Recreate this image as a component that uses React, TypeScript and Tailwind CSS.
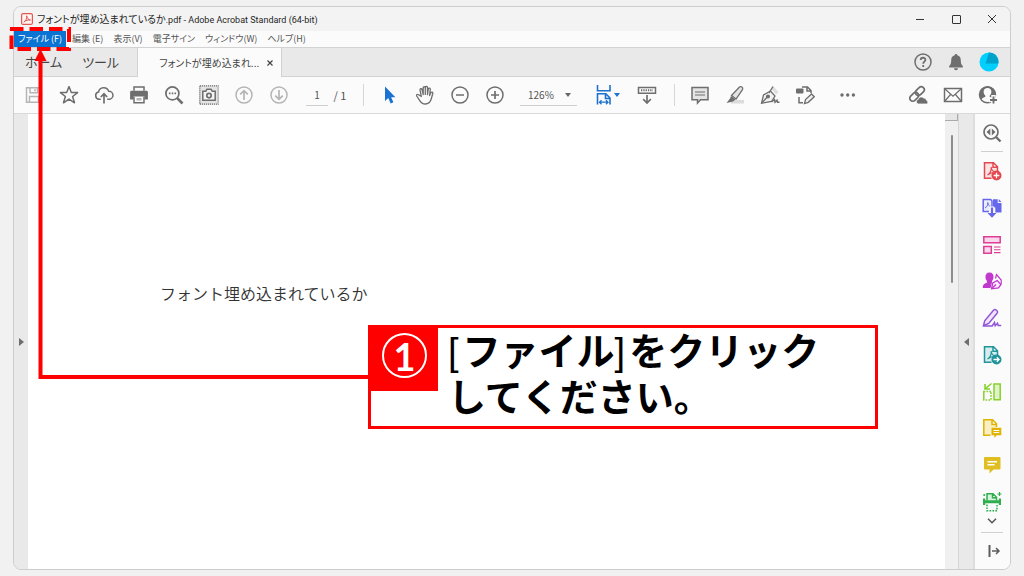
import React from "react";

type IconProps = { children: React.ReactNode; className?: string };

function Icon({ children, className = "size-5 text-[#6e6e6e]" }: IconProps) {
  return (
    <svg viewBox="0 0 20 20" fill="none" stroke="currentColor" strokeWidth="1.5" className={className} aria-hidden="true">
      {children}
    </svg>
  );
}

const menuItems = ["編集 (E)", "表示(V)", "電子サイン", "ウィンドウ(W)", "ヘルプ(H)"];

const fileTools = [
  {
    label: "保存",
    dim: true,
    icon: (
      <>
        <path d="M2.5 2.8h12.3l2.7 2.7v11.7h-15z" />
        <path d="M6 2.8v5h7.5v-5M11 4v2.2M5.5 17v-5.5h9V17" />
      </>
    ),
  },
  {
    label: "お気に入り",
    icon: <path strokeLinejoin="round" d="M10 1.6l2.3 6h6.3l-5 3.9 1.9 6.3L10 14.1l-5.5 3.7 1.9-6.3-5-3.9h6.3z" />,
  },
  {
    label: "クラウドに保存",
    icon: (
      <>
        <path d="M6.8 14.2H5a3.6 3.6 0 0 1-.5-7.1 5.3 5.3 0 0 1 10.2-.9 4 4 0 0 1 .5 8h-2" />
        <path strokeWidth="1.7" d="M10 18.5V9M6.8 12L10 8.8l3.2 3.2" />
      </>
    ),
  },
  {
    label: "印刷",
    icon: (
      <>
        <path d="M5 5.8V2h10v3.8" />
        <path fill="currentColor" stroke="none" d="M2.5 5.8h15a1.4 1.4 0 0 1 1.4 1.4V14.5h-3.4v-3h-11v3H1.100V7.200a1.4 1.4 0 0 1 1.4-1.4z" />
        <path d="M5 11.8v6h10v-6" />
        <path strokeWidth="2.5" opacity="0.5" d="M7.5 14.3h5" />
      </>
    ),
  },
  {
    label: "検索",
    icon: (
      <>
        <circle cx="8.4" cy="8.4" r="6.5" strokeWidth="1.7" />
        <path strokeWidth="2.6" d="M13.2 13.2l5.3 5.3" />
        <path strokeWidth="1.6" strokeDasharray="1.6 1.2" d="M4.9 8.4h7.2" />
      </>
    ),
  },
  {
    label: "スナップショット",
    icon: (
      <>
        <rect x="0.8" y="0.8" width="18.4" height="18.4" fill="#e4e4e4" strokeWidth="1.2" strokeDasharray="1.2 0.8" />
        <path fill="#f4f4f4" d="M3.8 6.2h3l1.2-2h4l1.2 2h3v9H3.800z" />
        <circle cx="10" cy="10.6" r="2.2" strokeWidth="1.7" />
      </>
    ),
  },
  {
    label: "前のページ",
    dim: true,
    icon: (
      <>
        <circle cx="10" cy="10" r="8" />
        <path strokeWidth="1.7" d="M10 15V6M6.2 9.4L10 5.6l3.8 3.8" />
      </>
    ),
  },
  {
    label: "次のページ",
    dim: true,
    icon: (
      <>
        <circle cx="10" cy="10" r="8" />
        <path strokeWidth="1.7" d="M10 5v9M6.2 10.6l3.8 3.8 3.8-3.8" />
      </>
    ),
  },
];

const viewTools = [
  {
    label: "選択ツール",
    blue: true,
    icon: <path fill="currentColor" stroke="none" d="M5 1.5v14.6l3.3-3 2.3 5.4 2.8-1.2-2.3-5.1h4.3z" />,
  },
  {
    label: "手のひらツール",
    icon: (
      <path
        strokeWidth="1.3"
        strokeLinejoin="round"
        d="M6.3 11.5L5 4.9c-.3-1.5 1.7-1.9 2-.4l1.2 5V2.7c0-1.5 2.1-1.5 2.1 0v6.7-7c0-1.5 2.2-1.5 2.2 0v7.3l.8-5.7c.2-1.4 2.2-1.1 2 .3l-.7 6.2 1.2-2.7c.6-1.3 2.4-.7 2 .7l-1.5 5.3c-.9 3.3-2.9 5.2-6 5.2-3 0-4.4-1.5-5.7-3.7L1.7 11c-.7-1.3.8-2.2 1.9-1.3z"
      />
    ),
  },
  {
    label: "縮小",
    icon: (
      <>
        <circle cx="10" cy="10" r="8" />
        <path strokeWidth="1.7" d="M6 10h8" />
      </>
    ),
  },
  {
    label: "拡大",
    icon: (
      <>
        <circle cx="10" cy="10" r="8" />
        <path strokeWidth="1.7" d="M6 10h8M10 6v8" />
      </>
    ),
  },
];

const markupTools = [
  {
    label: "コメント",
    icon: (
      <>
        <path fill="#e4e4e4" d="M2 2.5h16v12.2h-7.5L7.5 18v-3.3H2z" />
        <path strokeWidth="1.2" d="M5 7h10M5 10h10" />
      </>
    ),
  },
  {
    label: "ハイライト",
    icon: (
      <>
        <path fill="#dcdcdc" stroke="none" d="M6 15h13v3.5H6z" />
        <path fill="#e4e4e4" strokeWidth="1.3" d="M6.5 10.5l8-8.5c1.5-1.2 4 .6 3 2.6L11 14z" />
        <path fill="currentColor" stroke="none" d="M6 11l4.5 3.5-2.5 2-6.5 1.5 3.5-4.5z" />
      </>
    ),
  },
  {
    label: "署名",
    icon: (
      <>
        <path strokeWidth="1.3" fill="#f2f2f2" d="M1.5 18.3l2-8.3 7-4 4.5 5-3.5 5.5z" />
        <path strokeWidth="1.3" d="M1.5 18.3l5.5-6" />
        <circle cx="8" cy="11.5" r="1.3" fill="currentColor" />
        <path fill="#dedede" stroke="none" d="M11.5 4l2-2.500 5 5.500-2.500 2.500z" />
        <path strokeWidth="1.4" d="M9 8L13 1.5M11.5 17l3-2.5.5 2.7 2-2 .5 2h2" />
      </>
    ),
  },
  {
    label: "ページを編集",
    icon: (
      <>
        <path d="M7 2h5.5L16 5.5V8M12 2v4h4M4 12v5.8h4" />
        <rect x="1" y="3.5" width="7.5" height="5" rx="1" fill="currentColor" stroke="none" />
        <path strokeWidth="1.3" fill="#eee" d="M9.5 18.5l1-4 6-5.5 2.8 2.8-6 5.5z" />
      </>
    ),
  },
];

const shareTools = [
  {
    label: "リンクを共有",
    icon: (
      <>
        <g transform="rotate(-45 9 9)">
          <rect x="0" y="6" width="10" height="6" rx="3" strokeWidth="1.7" />
          <rect x="8" y="6" width="10" height="6" rx="3" strokeWidth="1.7" />
        </g>
        <path
          fill="currentColor"
          stroke="#fbfbfb"
          strokeWidth="0.8"
          d="M10.2 19a2.4 2.4 0 0 1 0-4.7 3.2 3.2 0 0 1 5.5-1.3 2.7 2.7 0 0 1 2.8 2.3 1.9 1.9 0 0 1 0 3.7z"
        />
      </>
    ),
  },
  {
    label: "メールで送信",
    icon: (
      <>
        <path d="M1.5 3.5h17v13h-17z" />
        <path strokeWidth="1.2" d="M2 4l8 7.2L18 4M2 16l5.5-6.5M18 16l-5.5-6.5" />
      </>
    ),
  },
  {
    label: "ユーザーを追加",
    icon: (
      <>
        <circle cx="9.5" cy="9.8" r="8" />
        <path
          fill="currentColor"
          stroke="none"
          fillRule="evenodd"
          d="M9.5 1.3a8.5 8.5 0 0 1 8.4 8.7h-3v2.5h-1.7c-.8-.4-1.7-.7-1.7-1.2 0-.8 1.9-1.7 1.9-4.5 0-2.5-1.5-3.900-3.900-3.900S5.600 4.300 5.600 6.800c0 2.800 1.900 3.700 1.900 4.500 0 1-3.700 1.200-4 3.700A8.500 8.500 0 0 1 9.500 1.300z"
        />
        <path stroke="#fbfbfb" strokeWidth="4.5" d="M15.500 10v9.500M11 15h9" />
        <path strokeWidth="1.9" d="M15.500 11.500v7M12 15h7" />
      </>
    ),
  },
];

const pdfMark = "M5.5 14c2.5-1.5 4-4.5 3.7-8 .3 3.5 2.2 5 4.8 5.3-3 0-6 .7-8.5 2.7";

const sideTools = [
  {
    label: "PDF を作成",
    color: "size-5 text-[#e34850]",
    icon: (
      <>
        <path fill="#fbe3e3" d="M9.5 17.2H2.5V1.800h9l4 4v4.700M11 1.800v4.500h4.500" />
        <path strokeWidth="1.1" d={pdfMark} />
        <circle cx="14.5" cy="14.5" r="5" fill="currentColor" stroke="none" />
        <path stroke="#fff" strokeWidth="1.3" d="M14.5 11.7v5.6M11.7 14.5h5.6" />
      </>
    ),
  },
  {
    label: "PDF を書き出し",
    color: "size-5 text-[#6767ec]",
    icon: (
      <>
        <path fill="#ececff" d="M7 13.5H1.200V1.500h7.500L10 3v8" />
        <path strokeWidth="1" d="M3 10c2-1 3-3 2.8-5.5C6 7 7 8 8.5 8.3" />
        <path fill="currentColor" stroke="none" d="M11 1.2h4.7V5h3.8v9.5h-6.2V9.500H11zM16.700 1l2.800 2.900h-2.800z" />
        <path stroke="#fbfbfb" strokeWidth="4.5" d="M10 8.5V16" />
        <path strokeWidth="2.2" d="M10 9.5V17" />
        <path fill="currentColor" stroke="none" d="M5.5 15h9L10 19.8z" />
      </>
    ),
  },
  {
    label: "PDF を編集",
    color: "size-5 text-[#de3d96]",
    icon: (
      <>
        <path fill="#f8d8ea" d="M1.8 1.8h16.4v6H1.800zM1.800 11.500h7.500v6.700H1.800z" />
        <path strokeWidth="1.1" d="M12 12h6.5M12 14.8h6.5M12 17.6h6.5" />
      </>
    ),
  },
  {
    label: "署名を依頼",
    color: "size-5 text-[#c038cc]",
    icon: (
      <>
        <path
          fill="currentColor"
          stroke="none"
          d="M7.500 1.500c2.700 0 4 1.700 4 4.200 0 2-.7 3.300-1.500 4.300v1.200L8.500 17H.8c-.3-3 1.200-4.500 4.200-5.600V10C4 9 3.500 7.700 3.500 5.700c0-2.500 1.300-4.200 4-4.200z"
        />
        <path strokeWidth="1.3" fill="#faeafa" d="M9.500 17.800l1.200-5.800 4.500-2.500 3.800 4-2.500 3.500z" />
        <path strokeWidth="1.2" d="M9.500 17.800l4.500-4.300M13.500 7.500l1-4 4.700 5.500v4" />
      </>
    ),
  },
  {
    label: "入力と署名",
    color: "size-5 text-[#9256d9]",
    icon: (
      <>
        <path fill="#f0e6fb" d="M1.5 17.8l1.2-5L11.5 2.200c1.700-1.700 5 .8 3.600 3L6.700 15.500z" />
        <path d="M1.5 18h8.700l2.300-3.500.7 3.200 2.300-2.500.7 2.300h3" />
      </>
    ),
  },
  {
    label: "PDF を送信",
    color: "size-5 text-[#1f959b]",
    icon: (
      <>
        <path fill="#d6eced" d="M9.5 17.2H2.500V1.800h9l4 4v4.700M11 1.800v4.500h4.500" />
        <path strokeWidth="1.1" d={pdfMark} />
        <circle cx="14.5" cy="14.5" r="5" fill="currentColor" stroke="none" />
        <path stroke="#fff" strokeWidth="1.3" d="M11.5 14.5h5.5M14.8 12.2l2.300 2.300-2.300 2.300" />
      </>
    ),
  },
  {
    label: "ページを整理",
    color: "size-5 text-[#86d12f]",
    icon: (
      <>
        <path fill="#dff4c6" d="M12 2h6.2v15.8H12z" />
        <path strokeDasharray="1.7 1.2" d="M9 9.5H1.800V18H9zM1.800 9.500V18" />
        <path strokeWidth="1.6" d="M9.5 1.5L3.500 6.500M3 2v5h5" />
      </>
    ),
  },
  {
    label: "コメント用に送信",
    color: "size-5 text-[#dfb300]",
    icon: (
      <>
        <path fill="#f8efc4" d="M8.5 17.2H1.800V1.800h8.700l4 4V9M10 1.800v4.700h4.500" />
        <path fill="currentColor" stroke="none" d="M9.5 9.8h9.8v7.4h-4.5l-2.500 2.600v-2.600H9.500z" />
        <path stroke="#fff" strokeWidth="1" d="M11.5 12.5h5.8M11.5 14.6h5.8" />
      </>
    ),
  },
  {
    label: "注釈",
    color: "size-5 text-[#e0be22]",
    icon: (
      <>
        <path fill="currentColor" stroke="none" d="M3 2h14.500q1 0 1 1v10.500q0 1-1 1h-6L7.500 18.500v-4H3q-1 0-1-1V3q0-1 1-1z" />
        <path stroke="#fff" d="M5.5 6.8h9.500M5.500 9.800h7" />
      </>
    ),
  },
  {
    label: "スキャンと OCR",
    color: "size-5 text-[#2fae4e]",
    icon: (
      <>
        <path fill="#d8f2de" d="M5 8.5V1.800h6l3.500 3.500v3.200M10.500 2v3.800h4" />
        <path fill="currentColor" stroke="none" d="M1 6.5h2.200v1.800h13.600V6.500H19v6.500h-2.200v-1.700H3.200V13H1z" />
        <path strokeDasharray="1.7 1.2" d="M5 12.5v6.200h10v-6.200" />
        <path strokeWidth="1.2" d="M2.200 2v2M1.200 3h2M17.500 0v4M15.500 2h4" />
      </>
    ),
  },
];

type Tool = { label: string; icon: React.ReactNode; dim?: boolean; blue?: boolean };

function ToolButton({ label, icon, dim, blue }: Tool) {
  const color = blue ? "size-5 text-[#1b72d0]" : dim ? "size-5 text-[#b5b5b5]" : "size-5 text-[#6e6e6e]";
  return (
    <button type="button" aria-label={label} className="flex h-9 w-[35px] shrink-0 items-center justify-center">
      <Icon className={color}>{icon}</Icon>
    </button>
  );
}

function TitleBar() {
  return (
    <header className="flex h-6 items-center bg-[#f3f3f3]">
      <svg viewBox="0 0 12 12" className="ml-[7px] size-3 shrink-0" aria-hidden="true">
        <rect x="0.6" y="0.6" width="10.8" height="10.8" rx="1.5" fill="#fff4f3" stroke="#e2574f" strokeWidth="1.2" />
        <path d="M2.8 9C4.8 8 6 5.5 5.7 2.8 6 5.3 7.5 6.8 9.5 7 7 6.8 4.5 7.5 2.8 9z" fill="none" stroke="#e2574f" />
      </svg>
      <h1 className="ml-1 flex-1 whitespace-nowrap text-[10px] leading-4 text-[#1f1f1f]">
        フォントが埋め込まれているか
        <span className="font-[Roboto] text-[9px]">.pdf - Adobe Acrobat Standard (64-bit)</span>
      </h1>
      <button type="button" aria-label="最小化" className="flex h-6 w-9 items-center justify-center">
        <span className="h-px w-2 bg-[#333]" />
      </button>
      <button type="button" aria-label="最大化" className="flex h-6 w-9 items-center justify-center">
        <span className="size-[9px] rounded-[1px] border border-[#333]" />
      </button>
      <button type="button" aria-label="閉じる" className="flex h-6 w-9 items-center justify-center">
        <svg viewBox="0 0 10 10" className="size-[10px]" stroke="#333" aria-hidden="true">
          <path d="M1 1l8 8M9 1L1 9" />
        </svg>
      </button>
    </header>
  );
}

function MenuBar() {
  return (
    <nav className="flex h-4 items-center whitespace-nowrap bg-[#fbfbfb] text-[9px] leading-4 text-[#555]">
      <button type="button" className="h-4 w-[52px] bg-[#0b74d3] text-white">
        ファイル (F)
      </button>
      <div className="ml-1.5 flex gap-2.5">
        {menuItems.map((item) => (
          <button key={item} type="button">
            {item}
          </button>
        ))}
      </div>
    </nav>
  );
}

function TabBar() {
  return (
    <div className="flex h-[30px] items-stretch whitespace-nowrap border-y border-[#d2d2d2] bg-[#e9e9e9] text-[#444]">
      <button type="button" className="ml-[11px] text-[13px]">ホーム</button>
      <button type="button" className="ml-5 text-[13px]">ツール</button>
      <div className="-mb-px ml-[18px] flex w-[145px] items-center justify-between border-x border-[#d2d2d2] bg-[#fbfbfb] pr-1.5 pl-[21px]">
        <button type="button" className="text-[10px]">フォントが埋め込まれ...</button>
        <button type="button" aria-label="タブを閉じる" className="p-0.5">
          <svg viewBox="0 0 6 6" className="size-1.5" stroke="#444" strokeWidth="1.2" aria-hidden="true">
            <path d="M.5.5l5 5M5.5.5l-5 5" />
          </svg>
        </button>
      </div>
      <div className="ml-auto flex items-center pr-[5px]">
        <button type="button" aria-label="ヘルプ" className="flex w-[33px] justify-center">
          <Icon>
            <circle cx="10" cy="10" r="8" />
            <path strokeWidth="1.8" d="M7.700 8c0-3 4.700-2.900 4.700-.2 0 1.900-2.200 1.700-2.200 4M10.200 13v1.900" />
          </Icon>
        </button>
        <button type="button" aria-label="通知" className="flex w-[33px] justify-center">
          <Icon>
            <path
              fill="currentColor"
              stroke="none"
              d="M10 2c.9 0 1.3.6 1.3 1.3 2.5.6 3.500 2.500 3.500 5 0 3.500.7 4.500 2 5.700v1.500H3.200V14c1.300-1.200 2-2.200 2-5.700 0-2.500 1-4.400 3.500-5C8.700 2.600 9.100 2 10 2zM8 16.300h4c0 1.200-.8 2-2 2s-2-.8-2-2z"
            />
          </Icon>
        </button>
        <button type="button" aria-label="アカウント" className="flex w-[33px] justify-center">
          <Icon>
            <circle cx="10" cy="10" r="9.5" fill="#00cfff" stroke="none" />
            <path fill="#00a2cb" stroke="none" d="M6.5 11.5L10 .5a9.500 9.500 0 0 1 9.400 11z" />
          </Icon>
        </button>
      </div>
    </div>
  );
}

function Toolbar() {
  return (
    <div className="flex h-[37px] items-center border-b border-[#d9d9d9] bg-[#fbfbfb] text-[10px] text-[#555]">
      <div className="ml-0.5 flex">
        {fileTools.map((tool) => (
          <ToolButton key={tool.label} {...tool} />
        ))}
      </div>
      <label className="ml-2.5 flex items-center gap-1 whitespace-nowrap">
        <input
          aria-label="ページ番号"
          defaultValue="1"
          className="h-[22px] w-[22px] border-b border-[#cfcfcf] bg-transparent text-center text-[10px]"
        />
        <span className="w-4 text-center text-[11px]">/ 1</span>
      </label>
      <span className="ml-[15px] h-[22px] w-px bg-[#d6d6d6]" />
      <div className="ml-2 flex">
        {viewTools.map((tool) => (
          <ToolButton key={tool.label} {...tool} />
        ))}
      </div>
      <div className="relative ml-2">
        <select
          aria-label="ズーム"
          className="h-[22px] w-[57px] appearance-none border-b border-[#cfcfcf] bg-transparent pl-2 text-[10px]"
        >
          <option>126%</option>
        </select>
        <span className="pointer-events-none absolute top-[9px] right-1.5 border-x-3 border-t-4 border-x-transparent border-t-[#666]" />
      </div>
      <button type="button" aria-label="幅に合わせる" className="ml-2 flex h-9 w-11 items-center justify-center text-[#1b72d0]">
        <Icon className="size-5 text-[#1b72d0]">
          <path strokeWidth="1.6" d="M3.5 0v5.8h12.500V0M3.500 19.500V8.800h8.300L16 13v6.500M11.500 9v4.500H16" />
          <path strokeWidth="1.3" d="M5.5 17.2h8.500M7.500 15.200l-2 2 2 2M12 15.200l2 2-2 2" />
        </Icon>
        <span className="border-x-3 border-t-4 border-x-transparent border-t-[#1b72d0]" />
      </button>
      <ToolButton
        label="スクロール"
        icon={
          <>
            <path d="M1.5 2.5h17v5.7h-17z" />
            <path strokeDasharray="1.3 1" strokeWidth="2" d="M4 5.3h12" />
            <path strokeWidth="1.7" d="M10 10v7.5M6.2 14.2L10 18l3.8-3.8" />
          </>
        }
      />
      <span className="ml-2.5 h-[22px] w-px bg-[#d6d6d6]" />
      <div className="ml-[7px] flex">
        {markupTools.map((tool) => (
          <ToolButton key={tool.label} {...tool} />
        ))}
      </div>
      <div className="ml-2">
        <ToolButton
          label="その他"
          icon={
            <g fill="currentColor" stroke="none">
              <circle cx="4" cy="10" r="1.7" />
              <circle cx="9.7" cy="10" r="1.7" />
              <circle cx="15.4" cy="10" r="1.7" />
            </g>
          }
        />
      </div>
      <div className="ml-auto flex pr-[5px]">
        {shareTools.map((tool) => (
          <ToolButton key={tool.label} {...tool} />
        ))}
      </div>
    </div>
  );
}

function SidePanel() {
  return (
    <aside className="flex w-[37px] flex-col items-center border-l-2 border-[#dedede] bg-[#fbfbfb] pr-px">
      <button type="button" aria-label="ツールを検索" className="flex h-[37px] items-center">
        <Icon>
          <circle cx="9" cy="9" r="7" strokeWidth="1.7" />
          <path strokeWidth="2.4" d="M14 14l4.500 4.500" />
          <path fill="currentColor" stroke="none" d="M8.3 5.5v7L4.500 9zM9.800 5.500v7L13.500 9z" />
        </Icon>
      </button>
      <hr className="w-[22px] border-[#d0d0d0]" />
      <div className="flex flex-1 flex-col pt-px">
        {sideTools.map((tool) => (
          <button key={tool.label} type="button" aria-label={tool.label} className="flex min-h-6 flex-1 items-center">
            <Icon className={tool.color}>{tool.icon}</Icon>
          </button>
        ))}
      </div>
      <button type="button" aria-label="さらに表示" className="-mt-0.5 mb-2">
        <svg viewBox="0 0 10 6" className="h-1.5 w-[10px]" fill="none" stroke="#555" strokeWidth="1.5" aria-hidden="true">
          <path d="M1 .8l4 4 4-4" />
        </svg>
      </button>
      <hr className="w-[22px] border-[#d0d0d0]" />
      <button type="button" aria-label="パネルを折りたたむ" className="flex h-9 items-center">
        <svg viewBox="0 0 14 14" className="ml-1 size-[14px]" fill="none" stroke="#5c5c5c" aria-hidden="true">
          <path strokeWidth="2" d="M2.5 1v12" />
          <path strokeWidth="1.5" d="M5 7h7M9 4l3 3-3 3" />
        </svg>
      </button>
    </aside>
  );
}

function DocumentArea() {
  return (
    <div className="flex flex-1 items-stretch">
      <button type="button" aria-label="左パネルを開く" className="flex w-[14px] items-center justify-center bg-[#e9e9e9]">
        <span className="border-y-4 border-l-5 border-y-transparent border-l-[#6e6e6e]" />
      </button>
      <main className="flex-1 bg-white">
        <p className="pt-[167px] pl-[132px] text-base leading-6 font-[350] text-[#333]">フォント埋め込まれているか</p>
      </main>
      <div className="flex w-[14px] flex-col items-center border-r border-[#d6d6d6] bg-[#f0f0f0]">
        <span className="h-[7px] w-full border-r border-b border-[#aaa] bg-[#e6e6e6]" />
        <span className="mt-[14px] h-[148px] w-0.5 rounded-full bg-[#8d8d8d]" />
      </div>
      <button type="button" aria-label="右パネルを閉じる" className="flex w-[14px] items-center justify-center bg-[#e9e9e9]">
        <span className="border-y-4 border-r-5 border-y-transparent border-r-[#6e6e6e]" />
      </button>
      <SidePanel />
    </div>
  );
}

/* Red marker around the File menu, the arrow to it and the numbered step */
function StepCallout() {
  return (
    <>
      <svg
        viewBox="0 0 380 390"
        className="pointer-events-none absolute top-0 left-0 h-[390px] w-[380px]"
        fill="none"
        stroke="#fe0000"
        strokeWidth="4"
        aria-hidden="true"
      >
        <path strokeDasharray="13.5 6" d="M10 29h59v20h-57.500V29" />
        <path d="M370 377H40.500V58" />
        <path fill="#fe0000" stroke="none" d="M40.500 49l6 12h-12z" />
      </svg>
      <section className="absolute top-[325px] left-[368px] flex w-[510px] items-start border-3 border-[#fe0000] bg-white pb-[5px] font-['Liberation_Sans','Noto_Sans_CJK_JP',sans-serif]">
        <div className="flex h-[63px] w-[67px] shrink-0 items-start justify-center bg-[#fe0000] pt-[5px]">
          <span className="flex size-[45px] items-center justify-center rounded-full border-2 border-white font-['Lato',sans-serif] text-[38px] leading-10 font-bold text-white">
            1
          </span>
        </div>
        <p className="pt-px pl-2.5 text-[38px] leading-[46px] font-bold whitespace-nowrap text-black">
          <span className="mr-1 font-normal">[</span>ファイル<span className="mr-1 font-normal">]</span>をクリック
          <br />
          してください。
        </p>
      </section>
    </>
  );
}

export default function App() {
  return (
    <div className="relative flex min-h-screen flex-col bg-[#f1f1f1] px-[13px] py-1.5 font-['Noto_Sans_CJK_JP',sans-serif]">
      <div className="flex flex-1 flex-col overflow-hidden rounded-lg border border-[#cdcdcd]">
        <div className="[font-feature-settings:'palt']">
          <TitleBar />
          <MenuBar />
          <TabBar />
          <Toolbar />
        </div>
        <DocumentArea />
      </div>
      <StepCallout />
    </div>
  );
}
